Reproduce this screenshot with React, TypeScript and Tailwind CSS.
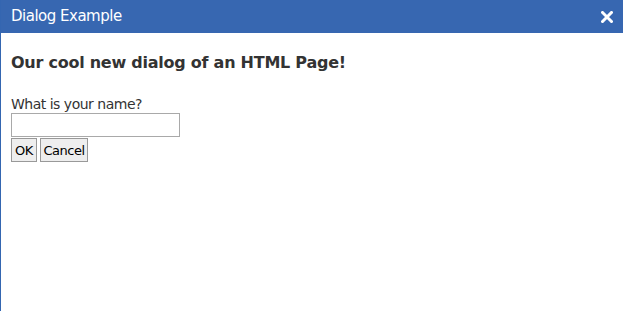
import React from "react";

export default function App() {
  return (
    <div className="w-[623px] h-[311px] bg-white border-l border-[#3466b1] flex flex-col overflow-hidden" style={{ fontFamily: '"DejaVu Sans", sans-serif' }}>
      <div className="h-[33px] bg-[#3767b1] flex items-center justify-between pl-[10px] pr-[10px] shrink-0">
        <span className="text-white text-[15px] leading-none tracking-[-0.5px]">Dialog Example</span>
        <svg width="12" height="12" viewBox="0 0 12 12" className="mr-[0px]">
          <path d="M1.5 1.5 L10.5 10.5 M10.5 1.5 L1.5 10.5" stroke="white" strokeWidth="3" strokeLinecap="square" />
        </svg>
      </div>
      <div className="pl-[10px] pt-[20px] text-[#333333]">
        <h1 className="text-[16px] font-bold leading-[20px] tracking-[-0.25px]">Our cool new dialog of an HTML Page!</h1>
        <div className="mt-[23px] text-[14px] leading-[17px] tracking-[-0.5px]">What is your name?</div>
        <input type="text" className="block w-[169px] h-[24px] border border-[#a9a9a9] outline-none" />
        <div className="flex gap-[3px] mt-[1px]">
          <button className="h-[24px] w-[26px] text-[13px] border border-[#999] bg-[#eeeeee] text-black leading-none tracking-[-0.5px] flex items-center justify-center">OK</button>
          <button className="h-[24px] w-[48px] text-[13px] border border-[#999] bg-[#eeeeee] text-black leading-none tracking-[-0.5px] flex items-center justify-center">Cancel</button>
        </div>
      </div>
    </div>
  );
}
